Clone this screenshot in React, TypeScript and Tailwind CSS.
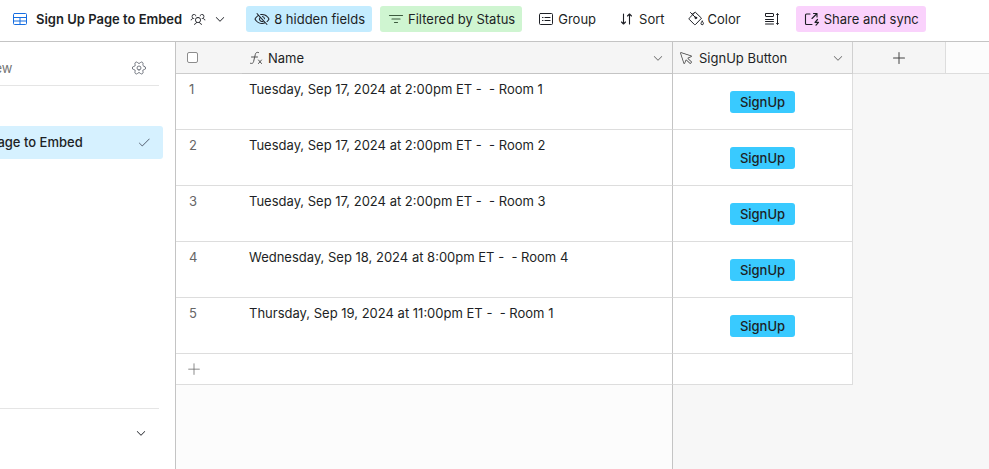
import type { ReactNode } from "react";
import { Settings } from "lucide-react";
import {
  PiCaretDown,
  PiCheckLight,
  PiCursorLight,
  PiEyeSlash,
  PiPlus,
  PiPlusLight,
  PiUsersThreeLight,
} from "react-icons/pi";

const records = [
  { id: 1, name: "Tuesday, Sep 17, 2024 at 2:00pm ET -  - Room 1" },
  { id: 2, name: "Tuesday, Sep 17, 2024 at 2:00pm ET -  - Room 2" },
  { id: 3, name: "Tuesday, Sep 17, 2024 at 2:00pm ET -  - Room 3" },
  { id: 4, name: "Wednesday, Sep 18, 2024 at 8:00pm ET -  - Room 4" },
  { id: 5, name: "Thursday, Sep 19, 2024 at 11:00pm ET -  - Room 1" },
];

function Icon({ children, className = "" }: { children: ReactNode; className?: string }) {
  return (
    <svg
      viewBox="0 0 16 16"
      fill="none"
      stroke="currentColor"
      strokeLinecap="round"
      strokeLinejoin="round"
      aria-hidden="true"
      className={`h-4 w-4 shrink-0 ${className}`}
    >
      {children}
    </svg>
  );
}

function GridIcon() {
  return (
    <Icon className="text-[#166ee1]">
      <rect x="1.5" y="2.5" width="13" height="11" rx="1" />
      <path d="M1.5 6.5h13M1.5 10h13M8 6.5v7" />
    </Icon>
  );
}

function FilterIcon() {
  return (
    <Icon className="text-[#3c5a3e]">
      <path d="M1.5 4.5h13M4 8h8M6.5 11.5h3" strokeWidth="1.2" />
    </Icon>
  );
}

function GroupIcon() {
  return (
    <Icon>
      <rect x="1.5" y="2.5" width="13" height="11" rx="1" />
      <path d="M7 6.5h5M7 9.5h5M4.5 6.5h.5M4.5 9.5h.5" strokeWidth="1.2" />
    </Icon>
  );
}

function SortIcon() {
  return (
    <Icon>
      <path d="M4.5 3v10M2.5 11l2 2 2-2M10.5 13V3M8.5 5l2-2 2 2" strokeWidth="1.1" />
    </Icon>
  );
}

function PaintIcon() {
  return (
    <Icon>
      <path d="M2.5 1.5l5 5M4.2 3.2L7.3 1.2 13.5 7.2 7.5 13.5a.8.8 0 0 1-1.1 0L1.2 8.3a.8.8 0 0 1 0-1.1l5-5" />
      <circle cx="7.8" cy="6.8" r="0.9" fill="currentColor" />
      <path d="M14.2 10.2c-.8 1.1-1.2 1.7-1.2 2.3a1.2 1.2 0 0 0 2.4 0c0-.6-.4-1.2-1.2-2.3z" />
    </Icon>
  );
}

function RowHeightIcon() {
  return (
    <Icon>
      <rect x="1.5" y="2.5" width="8" height="3" rx="0.5" />
      <path d="M1.5 8.5h8M1.5 10.5h8M1.5 13h8M13.5 3v10M12.5 3.5l1-1 1 1M12.5 12.5l1 1 1-1" />
    </Icon>
  );
}

function ShareIcon() {
  return (
    <Icon>
      <path d="M6 3H2.5a1 1 0 0 0-1 1v8.5a1 1 0 0 0 1 1H8" strokeWidth="1.1" />
      <path d="M8 7.5l5-5M9.5 2.5H13V6" strokeWidth="1.1" />
      <path d="M13.5 8.5L11 11.3h3.5L12 14.1" strokeWidth="1.2" />
    </Icon>
  );
}

function FormulaIcon() {
  return (
    <Icon className="text-[#555555]">
      <path d="M10.5 2.5c-2-.6-2.8.3-3.2 2l-1.7 7c-.4 1.7-1.3 2.3-3.1 1.8M3.5 7h6" />
      <path d="M10.5 10l3 3.5M13.5 10l-3 3.5" />
    </Icon>
  );
}

function Toolbar() {
  return (
    <header className="flex h-[42px] items-center border-b border-[#c4c4c4] bg-white pb-[3px] pl-3 whitespace-nowrap">
      <button type="button" className="flex items-center gap-2 font-semibold">
        <GridIcon />
        Sign Up Page to Embed
        <PiUsersThreeLight className="h-4 w-4" />
        <PiCaretDown className="h-3 w-3" />
      </button>
      <button type="button" className="ml-5 flex h-[26px] items-center gap-1 rounded-[3px] bg-[#c4ecff] pr-[7px] pl-2">
        <PiEyeSlash className="h-4 w-4" />
        8 hidden fields
      </button>
      <button type="button" className="ml-2 flex h-[26px] items-center gap-1 rounded-[3px] bg-[#cff5d1] pr-[7px] pl-2">
        <FilterIcon />
        Filtered by Status
      </button>
      <button type="button" className="ml-2 flex h-[26px] items-center gap-1 pr-[7px] pl-2">
        <GroupIcon />
        Group
      </button>
      <button type="button" className="ml-2 flex h-[26px] items-center gap-1 pr-[7px] pl-2">
        <SortIcon />
        Sort
      </button>
      <button type="button" className="ml-2 flex h-[26px] items-center gap-1 pr-[7px] pl-2">
        <PaintIcon />
        Color
      </button>
      <button type="button" aria-label="Row height" className="ml-2 flex h-[26px] items-center px-2">
        <RowHeightIcon />
      </button>
      <button type="button" className="ml-2 flex h-[26px] items-center gap-1 rounded-[3px] bg-[#fad2fc] pr-[7px] pl-2">
        <ShareIcon />
        Share and sync
      </button>
    </header>
  );
}

// The views panel is wider than its slot, so its left side runs off the window.
function ViewsPanel() {
  return (
    <aside className="flex w-44 shrink-0 justify-end overflow-hidden border-r border-[#c4c4c4] bg-white">
      <div className="flex w-[280px] shrink-0 flex-col px-3">
        <div className="mr-1 flex h-11 items-center border-b border-[#e5e5e5] pt-2 pr-3 pl-9">
          <input
            type="text"
            aria-label="Find a view"
            placeholder="Find a view"
            className="min-w-0 flex-1 outline-none placeholder:text-[#757575]"
          />
          <button type="button" aria-label="View settings">
            <Settings strokeWidth={1.3} className="h-4 w-4 rotate-90 text-[#616670]" />
          </button>
        </div>
        <a
          href="#view"
          className="mt-10 flex h-[33px] items-center justify-between rounded-[3px] bg-[#d6f1ff] pr-3 pb-px pl-[30px] font-medium"
        >
          Sign Up Page to Embed
          <PiCheckLight className="h-[14px] w-[14px] text-[#4c5667]" />
        </a>
        <div className="mt-auto mr-1 flex h-[61px] items-start justify-end border-t border-[#e5e5e5] pt-[18px] pr-3">
          <button type="button" aria-label="Create a view">
            <PiCaretDown className="h-3 w-3" />
          </button>
        </div>
      </div>
    </aside>
  );
}

function RecordsTable() {
  return (
    <table className="w-full table-fixed border-separate border-spacing-0">
      <colgroup>
        <col className="w-[66px]" />
        <col className="w-[431px]" />
        <col className="w-[180px]" />
        <col className="w-[93px]" />
        <col />
      </colgroup>
      <thead>
        <tr className="h-8 bg-[#f5f5f5] text-left">
          <th className="border-b border-[#cccccc] pl-[11px]">
            <input
              type="checkbox"
              aria-label="Select all records"
              className="block h-[11px] w-[11px] appearance-none rounded-[2px] border border-[#8c8c8c] bg-white"
            />
          </th>
          <th className="border-r border-b border-[#c4c4c4] pr-2 pl-[6px] font-normal">
            <div className="flex items-center gap-1">
              <FormulaIcon />
              Name
              <PiCaretDown className="ml-auto h-3 w-3 text-[#666666]" />
            </div>
          </th>
          <th className="border-r border-b border-[#d0d0d0] pr-2 pl-[5px] font-normal">
            <div className="flex items-center gap-[5px]">
              <PiCursorLight className="h-4 w-4 text-[#444444]" />
              SignUp Button
              <PiCaretDown className="ml-auto h-3 w-3 text-[#666666]" />
            </div>
          </th>
          <th className="border-r border-b border-[#dddddd]">
            <button type="button" aria-label="Add field" className="mx-auto block">
              <PiPlus className="h-4 w-4 text-[#444444]" />
            </button>
          </th>
          <th aria-hidden="true" className="border-b border-[#dddddd] bg-[#fcfcfc]" />
        </tr>
      </thead>
      <tbody className="[&_td]:border-[#dddddd]">
        {records.map((record) => (
          <tr key={record.id} className="h-14">
            <td className="border-b bg-white pt-[5px] pl-[13px] align-top text-[#666666]">{record.id}</td>
            <td className="border-r border-b border-r-[#c4c4c4]! bg-white pt-[5px] pl-[7px] align-top whitespace-pre">
              {record.name}
            </td>
            <td className="border-r border-b bg-white text-center">
              <button type="button" className="h-[22px] rounded-[3px] bg-[#39caff] px-[10px] align-middle font-medium">
                SignUp
              </button>
            </td>
          </tr>
        ))}
        <tr className="h-[31px]">
          <td colSpan={2} className="border-r border-b border-r-[#c4c4c4]! bg-white pl-[10px]">
            <button type="button" aria-label="Add record" className="block">
              <PiPlusLight className="h-4 w-4 text-[#666666]" />
            </button>
          </td>
          <td className="border-r border-b bg-white" />
        </tr>
      </tbody>
    </table>
  );
}

export default function App() {
  return (
    <div className="flex min-h-screen flex-col overflow-hidden bg-white font-['Inter',sans-serif] text-[13px] leading-5 text-[#1d1f25]">
      <Toolbar />
      <div className="flex flex-1">
        <ViewsPanel />
        <main className="flex min-w-0 flex-1 flex-col bg-[#f7f7f7]">
          <RecordsTable />
          <div className="w-[497px] flex-1 border-r border-[#c4c4c4] bg-[#fcfcfc]" />
        </main>
      </div>
    </div>
  );
}
